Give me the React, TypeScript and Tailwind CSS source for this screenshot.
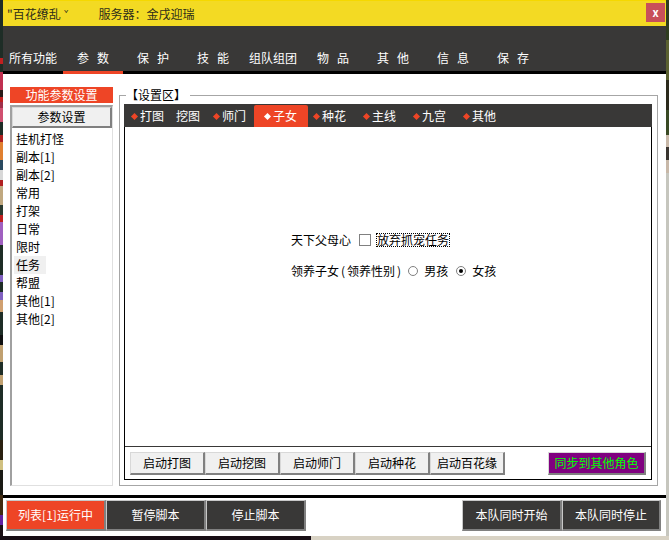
const font = "font-['Noto_Sans_CJK_SC','Liberation_Sans',sans-serif]";

const topTabs = [
  { chars: ["所有功能"] },
  { chars: ["参", "数"], active: true },
  { chars: ["保", "护"] },
  { chars: ["技", "能"] },
  { chars: ["组队组团"] },
  { chars: ["物", "品"] },
  { chars: ["其", "他"] },
  { chars: ["信", "息"] },
  { chars: ["保", "存"] },
];

const subTabs = [
  { label: "打图", dot: true, cls: "w-[50px] pl-[7px]" },
  { label: "挖图", cls: "w-[32px] pl-[2px]" },
  { label: "师门", dot: true, cls: "w-[48px] pl-[7px]" },
  { label: "子女", dot: true, active: true, cls: "w-[54px] pl-[10px] rounded-t-[2px] bg-[#ee4526]" },
  { label: "种花", dot: true, cls: "w-[50px] pl-[5px]" },
  { label: "主线", dot: true, cls: "w-[50px] pl-[5px]" },
  { label: "九宫", dot: true, cls: "w-[50px] pl-[5px]" },
  { label: "其他", dot: true, cls: "w-[50px] pl-[5px]" },
];

const sideItems = ["挂机打怪", "副本[1]", "副本[2]", "常用", "打架", "日常", "限时", "任务", "帮盟", "其他[1]", "其他[2]"];
const startButtons = ["启动打图", "启动挖图", "启动师门", "启动种花", "启动百花缘"];

// slices of the game window showing behind the dialog: [y, height, colour]
const leftSlices: [number, number, string][] = [
  [0, 58, "#1e2d26"], [58, 6, "#c02020"], [64, 8, "#1e2d26"], [72, 18, "#c03050"], [90, 7, "#2a1a18"],
  [97, 5, "#c02020"], [102, 6, "#a0304a"], [108, 14, "#d05070"], [122, 13, "#1e2d26"], [135, 7, "#b02020"],
  [142, 18, "#e08030"], [160, 10, "#2a4a60"], [170, 10, "#d8d8d8"], [180, 6, "#b02020"], [186, 19, "#c0a880"],
  [205, 10, "#2a3a30"], [215, 7, "#c02020"], [222, 23, "#a060c0"], [245, 30, "#1e2d26"], [275, 7, "#8060c0"],
  [282, 10, "#1e2d26"], [292, 8, "#8060c0"], [300, 12, "#d0a070"], [312, 23, "#1e2d26"], [335, 10, "#101010"],
  [345, 17, "#c0a070"], [362, 13, "#1e2d26"], [375, 10, "#c0a070"], [385, 55, "#1e2d26"], [440, 20, "#2a2010"],
  [460, 10, "#d0c080"], [470, 25, "#1a1a14"], [495, 20, "#402a10"], [515, 10, "#6020a0"], [525, 11, "#1a0f14"],
];

const rightSlices: [number, number, string][] = [
  [0, 40, "#2f3d20"], [40, 40, "#5a6030"], [80, 30, "#2c2a1c"], [110, 25, "#3a4a24"], [135, 12, "#c8b8a8"],
  [147, 13, "#3a3530"], [160, 13, "#c8b8a8"], [173, 363, "#c6c6be"],
];

function Strip({ slices }: { slices: [number, number, string][] }) {
  return (
    <svg width="3" height="536" className="block shrink-0">
      {slices.map(([y, h, c]) => (
        <rect key={y} x="0" y={y} width="3" height={h} fill={c} />
      ))}
    </svg>
  );
}

function Raised({ children, className }: { children: React.ReactNode; className: string }) {
  return (
    <div className={`flex items-center justify-center border border-t-[#d8d8d8] border-l-[#d8d8d8] border-r-2 border-b-2 border-r-[#808080] border-b-[#808080] ${className}`}>
      {children}
    </div>
  );
}

function DarkButton({ children, className }: { children: React.ReactNode; className: string }) {
  return (
    <div className={`flex h-[31px] items-center justify-center border border-t-[#c8c8c8] border-l-[#c8c8c8] border-r-2 border-b-2 border-r-[#808080] border-b-[#808080] text-[12px] text-white ${className}`}>
      {children}
    </div>
  );
}

export default function App() {
  return (
    <div className={`${font} flex h-[540px] w-[669px] flex-col overflow-hidden text-[12px] leading-none`}>
      <div className="flex h-[536px]">
        <Strip slices={leftSlices} />

        <div className="flex h-[536px] w-[663px] flex-col bg-white">
          {/* title bar */}
          <div className="flex h-[26px] shrink-0 items-center border-t border-[#f5d800] bg-[#f3da23] pl-[4px] pr-[1px] text-[#2e2e1a]">
            <span>"百花缭乱</span>
            <span className="ml-[3px] text-[8px]">ˇ</span>
            <span className="ml-[30px]">服务器：金戌迎瑞</span>
            <div className="ml-auto mt-[-2px] flex h-[19px] w-[19px] items-center justify-center bg-[#c8505a] text-[11px] font-bold text-white">x</div>
          </div>

          {/* top tabs */}
          <div className="flex h-[48px] shrink-0 bg-[#393837]">
            {topTabs.map((t, i) => (
              <div
                key={i}
                className={`flex w-[60px] justify-center gap-[8px] border-b-[3px] pt-[26px] text-white ${t.active ? "border-[#ee4526]" : "border-black"}`}
              >
                {t.chars.map((c) => (
                  <span key={c}>{c}</span>
                ))}
              </div>
            ))}
            <div className="flex-1 border-b-[3px] border-black" />
          </div>

          {/* body */}
          <div className="flex min-h-0 flex-1 pl-[7px] pb-[9px] pt-[13px]">
            <div className="flex w-[103px] flex-col">
              <div className="flex h-[16px] items-center justify-center bg-[#ee4526] text-white">功能参数设置</div>
              <div className="mt-[2px] flex flex-1 flex-col border-t-2 border-l-2 border-r border-b border-t-[#a0a0a0] border-l-[#a0a0a0] border-r-[#e0e0e0] border-b-[#e0e0e0]">
                <Raised className="h-[21px] bg-[#f0f0f0] text-black">参数设置</Raised>
                <div className="flex flex-col pl-[2px] pt-[2px] text-black">
                  {sideItems.map((s) => (
                    <div key={s} className={`flex h-[18px] w-[32px] items-center whitespace-nowrap pl-[2px] ${s === "任务" ? "bg-[#f0f0f0]" : ""}`}>
                      {s}
                    </div>
                  ))}
                </div>
              </div>
            </div>

            {/* settings group */}
            <div className="relative ml-[6px] mt-[8px] flex w-[539px] flex-col border border-[#a6a6a6] pl-[4px] pr-[5px] pb-[5px] pt-[8px]">
              <div className="absolute left-[6px] top-[-7px] bg-white pr-[4px] text-black">【设置区】</div>
              <div className="flex h-[23px] shrink-0 items-end bg-[#393837] text-white">
                {subTabs.map((t) => (
                  <div key={t.label} className={`flex h-[22px] items-center ${t.cls}`}>
                    {t.dot && (
                      <span className="flex w-[9px] items-center">
                        <span className={`ml-[1px] h-[5px] w-[5px] rotate-45 ${t.active ? "bg-white" : "bg-[#ee4526]"}`} />
                      </span>
                    )}
                    <span>{t.label}</span>
                  </div>
                ))}
              </div>
              <div className="flex min-h-0 flex-1 flex-col border border-t-0 border-black">
                <div className="flex flex-1 flex-col pl-[166px] pt-[104px] text-black">
                  <div className="flex h-[18px] items-center">
                    <span>天下父母心</span>
                    <span className="ml-[8px] h-[12px] w-[12px] border border-[#808080] bg-white" />
                    <span className="ml-[5px] border border-dotted border-black">放弃抓宠任务</span>
                  </div>
                  <div className="mt-[13px] flex h-[18px] items-center">
                    <span>领养子女<span className="px-[2px]">(</span>领养性别<span className="px-[2px]">)</span></span>
                    <span className="ml-[5px] h-[10px] w-[10px] rounded-full border border-[#808080] bg-white" />
                    <span className="ml-[6px]">男孩</span>
                    <span className="ml-[8px] flex h-[10px] w-[10px] items-center justify-center rounded-full border border-[#808080] bg-white">
                      <span className="h-[4px] w-[4px] rounded-full bg-black" />
                    </span>
                    <span className="ml-[6px]">女孩</span>
                  </div>
                </div>
                <div className="flex h-[33px] shrink-0 items-center border-t border-[#393837] pl-[5px] pr-[5px] text-black">
                  {startButtons.map((b) => (
                    <Raised key={b} className="h-[23px] w-[75px] bg-[#f0f0f0]">
                      {b}
                    </Raised>
                  ))}
                  <Raised className="ml-auto h-[23px] w-[98px] bg-[#800080] text-[#00ff00]">同步到其他角色</Raised>
                </div>
              </div>
            </div>
          </div>

          <div className="h-[3px] shrink-0 bg-black" />

          {/* bottom bar */}
          <div className="flex h-[38px] shrink-0 items-start pl-[3px] pr-[5px] pt-[2px]">
            <DarkButton className="w-[100px] bg-[#ee4526]">列表[1]运行中</DarkButton>
            <DarkButton className="w-[100px] bg-[#393837]">暂停脚本</DarkButton>
            <DarkButton className="w-[100px] bg-[#393837]">停止脚本</DarkButton>
            <DarkButton className="ml-auto w-[100px] bg-[#393837]">本队同时开始</DarkButton>
            <DarkButton className="w-[99px] bg-[#393837]">本队同时停止</DarkButton>
          </div>
        </div>

        <Strip slices={rightSlices} />
      </div>

      <div className="flex h-[4px]">
        <div className="w-[311px] bg-[#170d14]" />
        <div className="flex-1 bg-[#d8d2c4]" />
      </div>
    </div>
  );
}
